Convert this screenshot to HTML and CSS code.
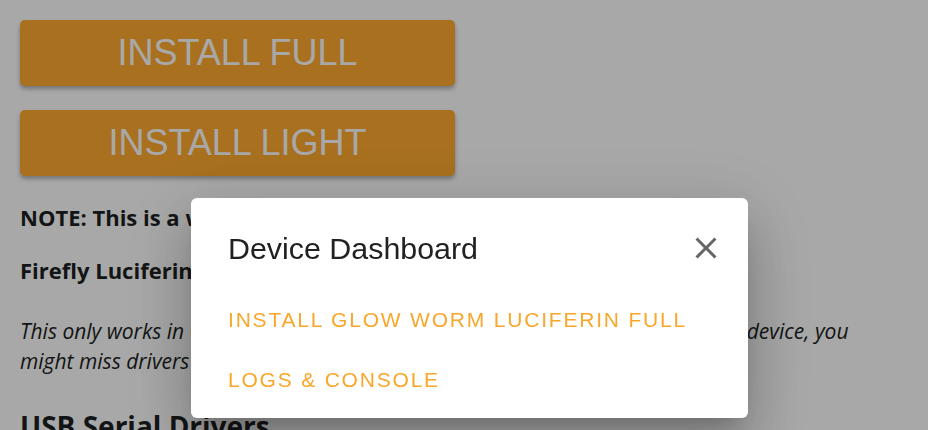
FILE: index.html
```html
<!DOCTYPE html>
<html lang="en">
<head>
<meta charset="utf-8">
<title>Glow Worm Luciferin Web Installer</title>
<link rel="stylesheet" href="styles.css">
</head>
<body>
<main class="page">
  <button class="install-btn">INSTALL FULL</button>
  <button class="install-btn">INSTALL LIGHT</button>
  <p class="note">NOTE: This is a web installer, it works on Chrome and Edge only.</p>
  <p class="note second">Firefly Luciferin must be closed while flashing.</p>
  <p class="hint">This only works in Chrome or Edge on a desktop. If the installer cannot see the device, you might miss drivers for the USB to serial chip on your board.</p>
  <h2 class="section">USB Serial Drivers</h2>
</main>

<div class="backdrop">
  <div class="dialog" role="dialog">
    <div class="dialog-header">
      <h1 class="dialog-title">Device Dashboard</h1>
      <button class="close-btn" aria-label="Close">
        <svg viewBox="0 0 24 24" width="36" height="36"><path d="M19 6.41L17.59 5 12 10.59 6.41 5 5 6.41 10.59 12 5 17.59 6.41 19 12 13.41 17.59 19 19 17.59 13.41 12z"/></svg>
      </button>
    </div>
    <div class="dialog-actions">
      <button class="action">INSTALL GLOW WORM LUCIFERIN FULL</button>
      <button class="action">LOGS &amp; CONSOLE</button>
    </div>
  </div>
</div>
</body>
</html>
```
FILE: styles.css
```css
html, body {
  margin: 0;
  padding: 0;
  background: #ffffff;
  overflow: hidden;
}

.page {
  padding: 20px;
  font-family: "Open Sans", "Noto Sans", sans-serif;
  color: #1c1f22;
}

.install-btn {
  display: block;
  width: 435px;
  height: 66px;
  margin: 0 0 24px 0;
  padding: 0;
  border: none;
  border-radius: 5px;
  background: #ffab30;
  color: #ffffff;
  font-family: "Liberation Sans", Arial, sans-serif;
  font-size: 36px;
  box-shadow: 0 3px 4px rgba(0, 0, 0, 0.3);
}

.note {
  margin: 26px 0 0 0;
  font-weight: 700;
  font-size: 22px;
  line-height: 30px;
}

.note.second {
  margin-top: 23px;
}

.hint {
  margin: 31px 0 0 0;
  max-width: 870px;
  font-style: italic;
  font-size: 21px;
  line-height: 30px;
}

.section {
  margin: 33px 0 0 0;
  font-size: 28px;
  line-height: 34px;
  font-weight: 700;
}

.backdrop {
  position: fixed;
  inset: 0;
  background: rgba(0, 0, 0, 0.34);
}

.dialog {
  position: absolute;
  left: 191px;
  top: 198px;
  width: 557px;
  height: 220px;
  box-sizing: border-box;
  background: #ffffff;
  border-radius: 6px;
  padding: 26px 24px 8px 0;
  box-shadow: 0 16px 22px -10px rgba(0, 0, 0, 0.2),
              0 36px 57px 5px rgba(0, 0, 0, 0.14),
              0 14px 69px 12px rgba(0, 0, 0, 0.12);
  font-family: "Liberation Sans", Arial, sans-serif;
}

.dialog-header {
  display: flex;
  align-items: center;
  justify-content: space-between;
  padding-left: 37px;
  height: 48px;
}

.dialog-title {
  margin: 0;
  font-size: 30.4px;
  line-height: 48px;
  font-weight: 400;
  color: #212121;
}

.close-btn {
  width: 36px;
  height: 36px;
  padding: 0;
  border: none;
  background: none;
  display: flex;
}

.close-btn svg {
  fill: #666666;
}

.dialog-actions {
  margin-top: 18px;
  display: flex;
  flex-direction: column;
  align-items: flex-start;
}

.action {
  border: none;
  background: none;
  padding: 0 0 0 37px;
  height: 60px;
  line-height: 60px;
  font-family: "Liberation Sans", Arial, sans-serif;
  font-size: 21px;
  letter-spacing: 1.8px;
  color: #f9a72b;
  text-align: left;
}
```
